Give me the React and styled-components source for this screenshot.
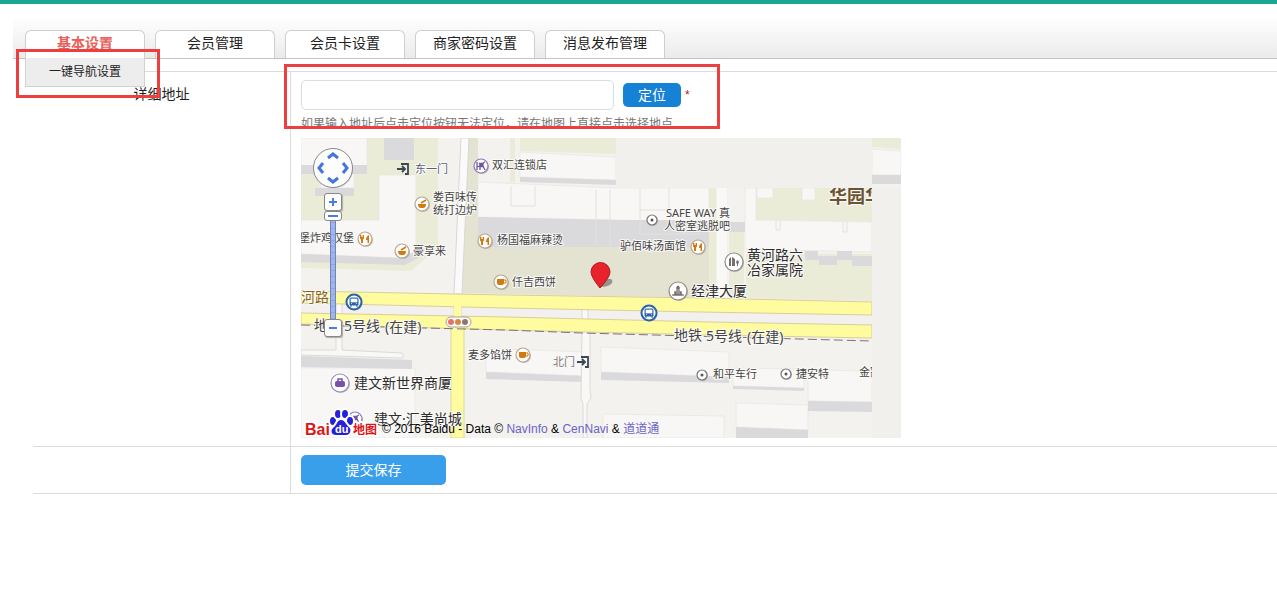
import React, { useState } from 'react';
import styled, { createGlobalStyle } from 'styled-components';

const GlobalStyle = createGlobalStyle`
  * {
    box-sizing: border-box;
  }
  body {
    margin: 0;
    background: #fff;
    color: #222;
    font: 14px/20px "Liberation Sans", "Noto Sans CJK SC", sans-serif;
  }
`;

const Page = styled.div`
  border-top: 4px solid #1ba794;
  padding-top: 14px;
  overflow-x: hidden;
`;

const TabBar = styled.nav`
  display: flex;
  gap: 10px;
  margin-left: 13px;
  padding: 12px 12px 0;
  border-bottom: 1px solid #c4c4c4;
  background: linear-gradient(#fefefe, #ebebeb);
`;

const TabItem = styled.div`
  position: relative;
  width: 120px;
`;

const Tab = styled.a`
  display: block;
  height: 28px;
  border: 1px solid #cfcfcf;
  border-bottom: 0;
  border-radius: 6px 6px 0 0;
  background: #fff;
  color: ${({ $active }) => ($active ? '#e8605c' : '#222')};
  font-weight: ${({ $active }) => ($active ? 700 : 400)};
  line-height: 25px;
  text-align: center;
  text-decoration: none;
`;

const SubMenu = styled.div`
  position: absolute;
  z-index: 2;
  top: 28px;
  left: 0;
  width: 100%;
  border: 1px solid #d2d2d2;
  border-top: 0;
  background: #ededed;
`;

const SubLink = styled.a`
  display: block;
  color: #222;
  font-size: 12px;
  line-height: 28px;
  text-align: center;
  text-decoration: none;
`;

const Highlight = styled.div`
  position: absolute;
  z-index: 3;
  top: ${({ $top }) => $top}px;
  left: ${({ $left }) => $left}px;
  width: ${({ $width }) => $width}px;
  height: ${({ $height }) => $height}px;
  border: 3px solid #ed3e40;
  pointer-events: none;
`;

const Form = styled.form`
  margin: 12px 0 0 33px;
  border-top: 1px solid #dcdcdc;
`;

const Row = styled.div`
  display: grid;
  grid-template-columns: 258px 1fr;
  border-bottom: 1px solid #dcdcdc;
`;

const LabelCell = styled.div`
  padding-top: 12px;
  border-right: 1px solid #dcdcdc;
  text-align: center;
`;

const FieldCell = styled.div`
  position: relative;
  padding: 8px 10px;
`;

const AddressLine = styled.div`
  display: flex;
  align-items: center;
`;

const AddressInput = styled.input`
  width: 313px;
  height: 30px;
  padding: 0 8px;
  border: 1px solid #d9dee2;
  border-radius: 5px;
  background: #fff;
  font: inherit;
`;

const LocateButton = styled.button`
  width: 58px;
  height: 24px;
  margin: 0 4px 0 9px;
  padding: 0;
  border: 0;
  border-radius: 5px;
  background: #1682d6;
  color: #fff;
  font: inherit;
`;

const Required = styled.span`
  color: #c1121c;
  font-size: 12px;
`;

const Hint = styled.p`
  height: 12px;
  margin: 4px 0 12px;
  overflow: hidden;
  color: #777;
  font-size: 12px;
  line-height: 20px;
`;

const SubmitButton = styled.button`
  display: block;
  width: 145px;
  height: 30px;
  padding: 0;
  border: 0;
  border-radius: 5px;
  background: #3a9fea;
  color: #fff;
  font: inherit;
`;

const MapBox = styled.div`
  position: relative;
  width: 600px;
  height: 300px;
  overflow: hidden;
  background: #f1f0ec;
`;

const MapDrawing = styled.svg`
  display: block;
  font-family: "Noto Sans", "Noto Sans CJK SC", sans-serif;
`;

const MapControls = styled.div`
  position: absolute;
  top: 9px;
  left: 11px;
  display: flex;
  flex-direction: column;
  align-items: center;
  width: 42px;
`;

const PanPad = styled.button`
  width: 42px;
  height: 42px;
  margin-bottom: 4px;
  padding: 0;
  border: 0;
  background: none;
`;

const ZoomButton = styled.button`
  display: block;
  width: 18px;
  height: 18px;
  padding: 0;
  border: 1px solid #888;
  border-radius: 3px;
  background: #fdfdfd;
  box-shadow: 1px 1px 1px #aaa;
  svg {
    display: block;
    margin: auto;
  }
`;

const ZoomRange = styled.input`
  appearance: none;
  writing-mode: vertical-lr;
  direction: rtl;
  width: 18px;
  height: 108px;
  margin: 0;
  background: none;
  &::-webkit-slider-runnable-track {
    width: 6px;
    margin: 0 6px;
    border: solid #7486ad;
    border-width: 0 1px;
    background: repeating-linear-gradient(#9db5f3 0 5px, #8aa5e8 5px 6px);
  }
  &::-webkit-slider-thumb {
    appearance: none;
    width: 18px;
    height: 10px;
    margin: 0 -7px;
    border: 1px solid #888;
    border-radius: 3px;
    background: linear-gradient(#4d7be0, #4d7be0) center / 10px 2px no-repeat #fdfdfd;
  }
`;

const Copyright = styled.div`
  position: absolute;
  bottom: 0;
  left: 3px;
  display: flex;
  align-items: flex-end;
  gap: 4px;
  color: #000;
  font-size: 12px;
  line-height: 18px;
  a {
    color: #6a64c8;
    text-decoration: none;
  }
`;

const tabs = ['基本设置', '会员管理', '会员卡设置', '商家密码设置', '消息发布管理'];

const greens = [
  'M0 0H137V110L110 133L0 130Z',
  'M219 0H315V16L219 13Z',
  'M209 0H214V44H209Z',
  'M408 50H415V160H408Z',
  'M428 94H443V158H428Z',
  'M455 50H571V84L455 82Z',
  'M445 116H571V163L445 160Z',
  'M571 0H600V11L571 9Z',
];

const roofs = [
  'M0 0H66V28H0Z',
  'M20 28H53V50H20Z',
  'M0 82H78V37H115V114L100 120L0 116Z',
  'M219 14L315 19V42L219 39Z',
  'M177 44L315 50H408V84L177 79Z',
  'M456 50H472V60H456Z',
  'M501 50H514V62H501Z',
  'M444 50H455V82L571 84V114L444 111Z',
  'M571 11L600 13V37H571Z',
  'M0 230H114V300H0Z',
  'M185 210L284 214V238L185 234Z',
  'M300 209L428 214V239L300 234Z',
  'M432 230L503 231V250L432 248Z',
  'M507 232L571 233V264L507 263Z',
  'M435 265L507 267V292L435 289Z',
  'M302 276L423 278V300H302Z',
];

const shades = [
  'M83 0H113V22H83Z',
  'M0 27H66V36H0Z',
  'M14 50H53V58H14Z',
  'M0 116L100 120L115 113L119 119L104 127L0 124Z',
  'M219 39L315 42V47L219 44Z',
  'M177 79L315 82H408V109H177Z',
  'M428 84H444V94H428Z',
  'M504 113H517V118H536V113H551V118H571V128H551V122H536V127H518V122H504Z',
  'M571 37H600V46H571Z',
  'M0 218L111 222V231L0 229Z',
  'M185 234L284 238V244L185 241Z',
  'M300 234L428 239V245L300 242Z',
  'M432 248L503 250V253L432 251Z',
  'M507 263L571 264V274L507 273Z',
  'M435 289L507 292V300H435Z',
];

const labels = [
  { text: '东一门', x: 114, y: 35, color: '#5b6078' },
  { text: '双汇连锁店', x: 191, y: 31 },
  { text: '娄百味传', x: 132, y: 63 },
  { text: '统打边炉', x: 132, y: 76 },
  { text: '堡炸鸡汉堡', x: -2, y: 104 },
  { text: '豪享来', x: 112, y: 117 },
  { text: '杨国福麻辣烫', x: 196, y: 106 },
  { text: '仟吉西饼', x: 211, y: 148 },
  { text: '驴佰味汤面馆', x: 319, y: 112 },
  { text: 'SAFE WAY 真', x: 365, y: 79 },
  { text: '人密室逃脱吧', x: 363, y: 92 },
  { text: '麦多馅饼', x: 167, y: 221 },
  { text: '北门', x: 252, y: 228, color: '#777' },
  { text: '和平车行', x: 412, y: 240 },
  { text: '捷安特', x: 495, y: 240 },
  { text: '金割', x: 558, y: 238 },
  { text: '黄河路六', x: 446, y: 122, size: 14, color: '#2c2c2c' },
  { text: '冶家属院', x: 446, y: 137, size: 14, color: '#2c2c2c' },
  { text: '经津大厦', x: 390, y: 158, size: 14, color: '#2c2c2c' },
  { text: '建文新世界商厦', x: 53, y: 250, size: 14, color: '#2c2c2c' },
  { text: '建文·汇美尚城', x: 73, y: 286, size: 14, color: '#2c2c2c' },
  { text: '河路', x: 0, y: 164, size: 14, color: '#8a6414' },
  { text: '地', x: 13, y: 192, size: 14 },
  { text: '5号线', x: 43, y: 193, size: 14 },
  { text: '(在建)', x: 84, y: 194, size: 14 },
  { text: '地铁', x: 373, y: 202, size: 14 },
  { text: '5号线', x: 405, y: 203, size: 14 },
  { text: '(在建)', x: 446, y: 204, size: 14 },
  { text: '华园华', x: 528, y: 65, size: 18, weight: 700, color: '#6b5430' },
];

const places = [
  { kind: 'chair', x: 180, y: 28 },
  { kind: 'bowl', x: 121, y: 66 },
  { kind: 'food', x: 64, y: 101 },
  { kind: 'bowl', x: 101, y: 113 },
  { kind: 'food', x: 184, y: 103 },
  { kind: 'cup', x: 200, y: 144 },
  { kind: 'food', x: 397, y: 109 },
  { kind: 'cup', x: 222, y: 217 },
  { kind: 'dot', x: 351, y: 82 },
  { kind: 'dot', x: 401, y: 237 },
  { kind: 'dot', x: 485, y: 236 },
  { kind: 'flats', x: 433, y: 124 },
  { kind: 'tower', x: 377, y: 153 },
  { kind: 'bag', x: 39, y: 245 },
  { kind: 'chair', x: 54, y: 281 },
  { kind: 'bus', x: 53, y: 164 },
  { kind: 'bus', x: 348, y: 175 },
  { kind: 'gate', x: 102, y: 31 },
  { kind: 'gate', x: 282, y: 224 },
];

const ring = {
  chair: { r: 7, stroke: '#8a78b8' },
  bowl: { r: 7, stroke: '#b9a48c' },
  food: { r: 7, stroke: '#b9a48c' },
  cup: { r: 7, stroke: '#b9a48c' },
  dot: { r: 5, stroke: '#777' },
  flats: { r: 9, stroke: '#8e8a88' },
  tower: { r: 9, stroke: '#8e8a88' },
  bag: { r: 9, stroke: '#9b8cc0' },
  bus: { r: 7.5, stroke: '#2a62a8' },
};

const glyphs = {
  chair: (
    <g fill="none" stroke="#6f55a5" strokeWidth="1.3">
      <path d="M-4 -4V4M-4 1L-1 0V4M4 -4Q1 -3 2 0L4 4" />
      <path d="M-2 -3H2V1H-1Z" fill="#6f55a5" strokeWidth="0.5" />
    </g>
  ),
  bowl: (
    <g fill="#d27a10">
      <path d="M-4 0H4Q4 4 1 4H-1Q-4 4 -4 0Z" />
      <path d="M-1 -1L4 -4" stroke="#d27a10" strokeWidth="1.5" />
    </g>
  ),
  food: (
    <g fill="#d27a10">
      <path d="M-5 -4H-4V-2H-3.400V-4H-2.600V-2H-2V-4H-1V-1Q-1 0 -2 0.500V4H-4V0.500Q-5 0 -5 -1Z" />
      <path d="M4 -4V4H2.500V1H1Q1 -3 4 -4Z" />
    </g>
  ),
  cup: (
    <g fill="#d27a10">
      <path d="M-4 -3H3V1Q3 3 1 3H-2Q-4 3 -4 1Z" />
      <path d="M3 -2H5V1H3" fill="none" stroke="#d27a10" />
    </g>
  ),
  dot: <circle r="1.5" fill="#555" />,
  flats: <path d="M-5 4V-3L-3 -5V4ZM-2 4V-5L1 -3V4ZM3 4V2Q1 0 3.500 -2Q6 0 4 2V4Z" fill="#77706e" />,
  tower: <path d="M-6 5V3H-4V0H-2V-4L0 -6L2 -4V0H4V3H6V5ZM-1 -2V3M1 -2V3" fill="#77706e" stroke="#fff" strokeWidth="0.5" />,
  bag: (
    <g>
      <rect x="-5" y="-2" width="10" height="6" rx="2" fill="#7653aa" />
      <path d="M-2 -2V-4H2V-2" fill="none" stroke="#7653aa" strokeWidth="1.5" />
    </g>
  ),
  bus: (
    <g>
      <path d="M-4 3V-3Q-4 -4 -3 -4H3Q4 -4 4 -3V3ZM-3 3V5M3 3V5" fill="#2a62a8" stroke="#2a62a8" />
      <path d="M-3 -3H3V0H-3ZM-3 1.5H-2M2 1.5H3" fill="#fff" stroke="#fff" strokeWidth="0.7" />
    </g>
  ),
  gate: <path d="M-2 -5H5V5H2M-6 0H2M-1 -3L2 0L-1 3" fill="none" stroke="#3d4654" strokeWidth="1.8" />,
};

function Place({ kind, x, y }) {
  const circle = ring[kind];
  return (
    <g transform={`translate(${x} ${y})`}>
      {circle && <circle cx="1" cy="1" r={circle.r} fill="#999" opacity="0.6" />}
      {circle && <circle r={circle.r} fill="#fff" stroke={circle.stroke} strokeWidth={kind === 'bus' ? 2 : 1.2} />}
      {glyphs[kind]}
    </g>
  );
}

function StreetMap() {
  return (
    <MapDrawing width="600" height="300" viewBox="0 0 600 300">
      <defs>
        <clipPath id="tiles">
          <path d="M0 0H315V50H571V300H0ZM571 0H600V50H571Z" />
        </clipPath>
        <clipPath id="mainTile">
          <path d="M-10 0H315V50H571V300H-10Z" />
        </clipPath>
      </defs>
      <g clipPath="url(#tiles)">
        <rect width="600" height="300" fill="#f3f2ef" />
        <path d="M163 0H177V79H415V160L155 155Z" fill="#e4e2d0" />
        {greens.map((d) => <path key={d} d={d} fill="#ebecd8" />)}
        {roofs.map((d) => <path key={d} d={d} fill="#f8f7f5" stroke="#e6e5e2" strokeWidth="0.7" />)}
        {shades.map((d) => <path key={d} d={d} fill="#dadadc" />)}
        <g fill="none" stroke="#e2e1df">
          <path d="M210 48V68H234V48M295 52V108M309 52V108M339 50V72H368V50M339 72V96H400" />
          <path d="M475 82V92H479V83M542 84V94H546V84" />
        </g>
        <path d="M160 0H168L161 156H153Z" fill="#fafafa" stroke="#d8d7d4" />
        <path d="M416 50H426V160H416Z" fill="#f8f8f7" />
        <path d="M0 165L571 177V187L0 175Z" fill="#f2f1f0" />
        <g fill="#f9f8f7" stroke="#dbdad7">
          <path d="M35 165H41V176H35ZM153 167H160V178H153ZM281 170H287V182H281Z" />
          <path d="M35 186V212H0V217L100 220Q104 220 101 215L41 212V186" />
          <path d="M281 192H289V250L290 260L286 266V300H282V266L280 260Z" />
        </g>
        <path d="M150 184H163V300H150Z" fill="#fefc9f" stroke="#ddd79c" />
        <path d="M0 153L205 157L399 160L571 164V177L399 174L205 170L0 165Z" fill="#fefc9f" stroke="#d9cf98" />
        <path d="M0 175L205 179L409 184L571 187V200L409 197L205 192L0 186Z" fill="#fefc9f" stroke="#d9cf98" />
        <path d="M153 167H160V180H153ZM151 184H162V195H151Z" fill="#fefc9f" />
        <path d="M0 187L205 192L281 195L571 203" fill="none" stroke="#77747a" strokeDasharray="9 4" />
      </g>
      <g transform="translate(157 184)">
        <rect x="-12" y="-5" width="25" height="10" rx="5" fill="#fff" stroke="#aaa092" />
        <circle cx="-7" r="3" fill="#e87070" />
        <circle r="3" fill="#db8740" />
        <circle cx="7" r="3" fill="#8d7770" />
      </g>
      {places.map((place) => <Place key={`${place.x}-${place.y}`} {...place} />)}
      <g clipPath="url(#mainTile)" stroke="#fbfaf8" strokeWidth="2" strokeLinejoin="round" paintOrder="stroke">
        {labels.map(({ text, x, y, size = 11, weight = 400, color = '#444' }) => (
          <text key={`${text}${x}`} x={x} y={y} fontSize={size} fontWeight={weight} fill={color}>{text}</text>
        ))}
      </g>
      <path d="M299 149L305 141Q313 140 311 145Q308 149 299 149Z" fill="#555" opacity="0.55" />
      <path d="M299 150Q290 139 290 134A9 9 0 0 1 309 134Q309 139 299 150Z" fill="#e8232b" stroke="#b5161d" />
    </MapDrawing>
  );
}

function MapLogo() {
  return (
    <svg width="74" height="30" viewBox="0 0 74 30" aria-label="Baidu 地图">
      <g stroke="#fff" strokeWidth="4" strokeLinejoin="round" paintOrder="stroke" fontWeight="700">
        <text x="1" y="27" fontSize="16" fill="#dc1517" fontFamily="Liberation Sans">Bai</text>
        <text x="49" y="26" fontSize="12" fill="#dc1517" fontFamily="Noto Sans CJK SC">地图</text>
        <g fill="#2521d8">
          <ellipse cx="29" cy="13" rx="3" ry="4" />
          <ellipse cx="34" cy="6" rx="3" ry="4" />
          <ellipse cx="41" cy="6" rx="3" ry="4" />
          <ellipse cx="46" cy="13" rx="3" ry="4" />
          <path d="M37 12C41 12 42 17 45 19C48 22 46 27 42 27H32C27 27 26 22 30 19C33 17 33 12 37 12Z" />
        </g>
      </g>
      <text x="31" y="25" fontSize="11" fontWeight="700" fill="#fff" fontFamily="Liberation Sans">du</text>
    </svg>
  );
}

function MapPicker() {
  const [zoom, setZoom] = useState(18);
  return (
    <MapBox>
      <StreetMap />
      <MapControls>
        <PanPad type="button" aria-label="平移">
          <svg width="42" height="42" viewBox="0 0 42 42">
            <circle cx="22" cy="22" r="19" fill="#999" opacity="0.5" />
            <circle cx="21" cy="21" r="19.5" fill="#fdfdfd" stroke="#888" />
            <path d="M16 11L21 7L26 11M16 31L21 35L26 31M11 16L7 21L11 26M31 16L35 21L31 26" fill="none" stroke="#4574dc" strokeWidth="3" />
          </svg>
        </PanPad>
        <ZoomButton type="button" aria-label="放大" onClick={() => setZoom(Math.min(18, zoom + 1))}>
          <svg width="10" height="10"><path d="M1 5H9M5 1V9" stroke="#4d7be0" strokeWidth="2" /></svg>
        </ZoomButton>
        <ZoomRange
          type="range"
          aria-label="缩放级别"
          min="3"
          max="18"
          value={zoom}
          onChange={(e) => setZoom(Number(e.target.value))}
        />
        <ZoomButton type="button" aria-label="缩小" onClick={() => setZoom(Math.max(3, zoom - 1))}>
          <svg width="10" height="10"><path d="M1 5H9" stroke="#4d7be0" strokeWidth="2" /></svg>
        </ZoomButton>
      </MapControls>
      <Copyright>
        <MapLogo />
        <span>
          © 2016 Baidu - Data © <a href="#navinfo">NavInfo</a> & <a href="#cennavi">CenNavi</a> & <a href="#daodaotong">道道通</a>
        </span>
      </Copyright>
    </MapBox>
  );
}

export default function App() {
  const [address, setAddress] = useState('');
  return (
    <Page>
      <GlobalStyle />
      <TabBar>
        {tabs.map((tab, i) => (
          <TabItem key={tab}>
            <Tab href="#" $active={i === 0}>{tab}</Tab>
            {i === 0 && (
              <>
                <SubMenu>
                  <SubLink href="#">一键导航设置</SubLink>
                </SubMenu>
                <Highlight $top={19} $left={-9} $width={144} $height={49} />
              </>
            )}
          </TabItem>
        ))}
      </TabBar>
      <Form onSubmit={(e) => e.preventDefault()}>
        <Row>
          <LabelCell>
            <label htmlFor="address">详细地址</label>
          </LabelCell>
          <FieldCell>
            <AddressLine>
              <AddressInput id="address" value={address} onChange={(e) => setAddress(e.target.value)} />
              <LocateButton type="button">定位</LocateButton>
              <Required>*</Required>
            </AddressLine>
            <Hint>如果输入地址后点击定位按钮无法定位，请在地图上直接点击选择地点</Hint>
            <MapPicker />
            <Highlight $top={-8} $left={-7} $width={436} $height={65} />
          </FieldCell>
        </Row>
        <Row>
          <LabelCell />
          <FieldCell>
            <SubmitButton type="submit">提交保存</SubmitButton>
          </FieldCell>
        </Row>
      </Form>
    </Page>
  );
}
